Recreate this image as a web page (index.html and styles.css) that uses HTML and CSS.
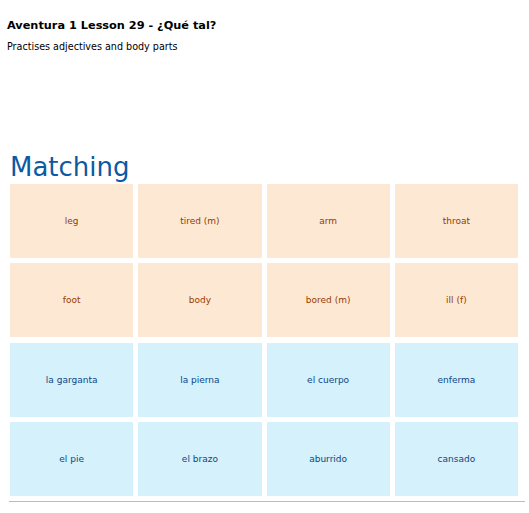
FILE: index.html
```html
<!DOCTYPE html>
<html>
<head>
<meta charset="utf-8">
<link rel="stylesheet" href="styles.css">
</head>
<body>
<div class="page">
  <header class="intro">
    <h1 class="title">Aventura 1 Lesson 29 - ¿Qué tal?</h1>
    <p class="desc">Practises adjectives and body parts</p>
  </header>
  <section class="activity">
    <h2 class="heading">Matching</h2>
    <div class="grid">
      <div class="card en">leg</div>
      <div class="card en">tired (m)</div>
      <div class="card en">arm</div>
      <div class="card en">throat</div>
      <div class="card en">foot</div>
      <div class="card en">body</div>
      <div class="card en">bored (m)</div>
      <div class="card en">ill (f)</div>
      <div class="card es">la garganta</div>
      <div class="card es">la pierna</div>
      <div class="card es">el cuerpo</div>
      <div class="card es">enferma</div>
      <div class="card es">el pie</div>
      <div class="card es">el brazo</div>
      <div class="card es">aburrido</div>
      <div class="card es">cansado</div>
    </div>
    <div class="rule"></div>
  </section>
</div>
</body>
</html>
```

FILE: styles.css
```css
* { box-sizing: border-box; }
html, body { margin: 0; padding: 0; background: #fff; }
body {
  font-family: "DejaVu Sans", Verdana, sans-serif;
  color: #000;
}
.page { padding: 19px 0 0 7px; }
.title {
  margin: 0;
  font-size: 11.3px;
  line-height: 14px;
  font-weight: bold;
}
.desc {
  margin: 8px 0 0 0;
  font-size: 9.6px;
  line-height: 12px;
}
.activity { margin-top: 97px; padding-left: 2px; }
.heading {
  margin: 0 0 0 1px;
  font-size: 26px;
  line-height: 34px;
  font-weight: normal;
  color: #0b5aa2;
}
.grid {
  margin: 0 0 0 1px;
  width: 508px;
  display: grid;
  grid-template-columns: repeat(4, 1fr);
  grid-auto-rows: 74px;
  column-gap: 5px;
  row-gap: 5.33px;
}
.card {
  display: flex;
  align-items: center;
  justify-content: center;
  font-size: 9px;
}
.card.en { background: #fde9d3; color: #983a00; }
.card.es { background: #d4f1fc; color: #0e4686; }
.rule {
  margin-top: 5px;
  width: 516px;
  height: 1px;
  background: #8ecbdc;
}
```
